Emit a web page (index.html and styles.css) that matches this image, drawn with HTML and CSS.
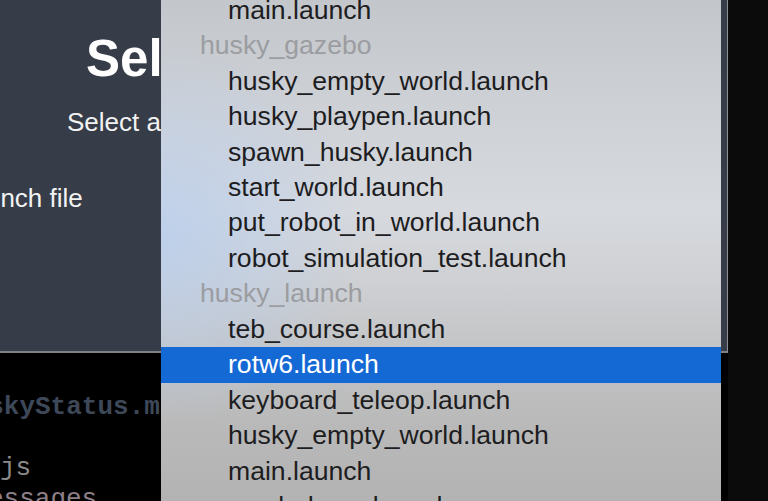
FILE: index.html
```html
<!DOCTYPE html>
<html lang="en">
<head>
<meta charset="utf-8">
<title>Select Launch File</title>
<link rel="stylesheet" href="styles.css">
</head>
<body>
<div class="screen">
  <div class="main-col">
    <section class="panel">
      <h1 class="title">Select Launch File</h1>
      <p class="subtitle">Select a launch file to start</p>
      <p class="label">Launch file</p>
    </section>
    <section class="terminal">
      <div class="term-line term-file">huskyStatus.msg</div>
      <div class="term-line">&nbsp;</div>
      <div class="term-line term-js">js</div>
      <div class="term-line term-msg">essages</div>
    </section>
  </div>
  <div class="side"></div>
</div>

<div class="menu">
  <ul class="menu-list">
    <li class="item">main.launch</li>
    <li class="group">husky_gazebo</li>
    <li class="item">husky_empty_world.launch</li>
    <li class="item">husky_playpen.launch</li>
    <li class="item">spawn_husky.launch</li>
    <li class="item">start_world.launch</li>
    <li class="item">put_robot_in_world.launch</li>
    <li class="item">robot_simulation_test.launch</li>
    <li class="group">husky_launch</li>
    <li class="item">teb_course.launch</li>
    <li class="item selected">rotw6.launch</li>
    <li class="item">keyboard_teleop.launch</li>
    <li class="item">husky_empty_world.launch</li>
    <li class="item">main.launch</li>
    <li class="item">amcl_demo.launch</li>
  </ul>
</div>
</body>
</html>
```

FILE: styles.css
```css
html, body {
  margin: 0;
  padding: 0;
}

body {
  width: 768px;
  height: 501px;
  overflow: hidden;
  background: #0b0b0b;
  font-family: "Liberation Sans", Arial, sans-serif;
  position: relative;
}

.screen {
  display: grid;
  grid-template-columns: 728px 1fr;
  height: 501px;
}

.main-col {
  display: flex;
  flex-direction: column;
  overflow: hidden;
}

.panel {
  height: 353px;
  box-sizing: border-box;
  background: #363c48;
  border-right: 1px solid #8c8f94;
  border-bottom: 2px solid #7d8085;
  padding-top: 34px;
  overflow: hidden;
  color: #ffffff;
}

.title {
  margin: 0 0 0 86px;
  font-size: 51px;
  line-height: 50px;
  font-weight: bold;
  white-space: nowrap;
}

.subtitle {
  margin: 25px 0 0 67px;
  font-size: 26px;
  line-height: 26px;
  color: #f2f2f2;
  white-space: nowrap;
}

.label {
  margin: 50px 0 0 -43px;
  font-size: 26px;
  line-height: 26px;
  color: #f2f2f2;
  white-space: nowrap;
}

.terminal {
  flex: 1;
  background: #000000;
  padding-top: 39px;
  font-family: "Liberation Mono", "Courier New", monospace;
  font-size: 26px;
  font-weight: bold;
  overflow: hidden;
}

.term-line {
  line-height: 30.5px;
  height: 30.5px;
  white-space: nowrap;
}

.term-file {
  margin-left: -43px;
  color: #3d4858;
}

.term-js {
  color: #8a8a8a;
  font-weight: normal;
}

.term-msg {
  margin-left: -12px;
  color: #8d8088;
  font-weight: normal;
}

.side {
  background: #0b0b0b;
}

.menu {
  position: absolute;
  left: 161px;
  top: 0;
  width: 560px;
  height: 501px;
  overflow: hidden;
  background:
    radial-gradient(ellipse 200px 190px at 0px 235px, rgba(184, 206, 238, 0.8), rgba(184, 206, 238, 0) 100%),
    linear-gradient(180deg, #c3c6cb 0%, #cdd0d5 20%, #d6d9de 42%, #cfd1d4 55%, #c3c4c6 70%, #b9b9b9 85%, #b3b3b3 100%);
}

.menu-list {
  list-style: none;
  margin: -7.2px 0 0 0;
  padding: 0;
}

.menu-list li {
  height: 35.45px;
  line-height: 35.45px;
  font-size: 26.6px;
  white-space: nowrap;
}

.item {
  padding-left: 67px;
  color: #1d1d1f;
}

.group {
  padding-left: 39px;
  color: #9b9da1;
}

.item.selected {
  background: #1569d5;
  color: #ffffff;
}
```
